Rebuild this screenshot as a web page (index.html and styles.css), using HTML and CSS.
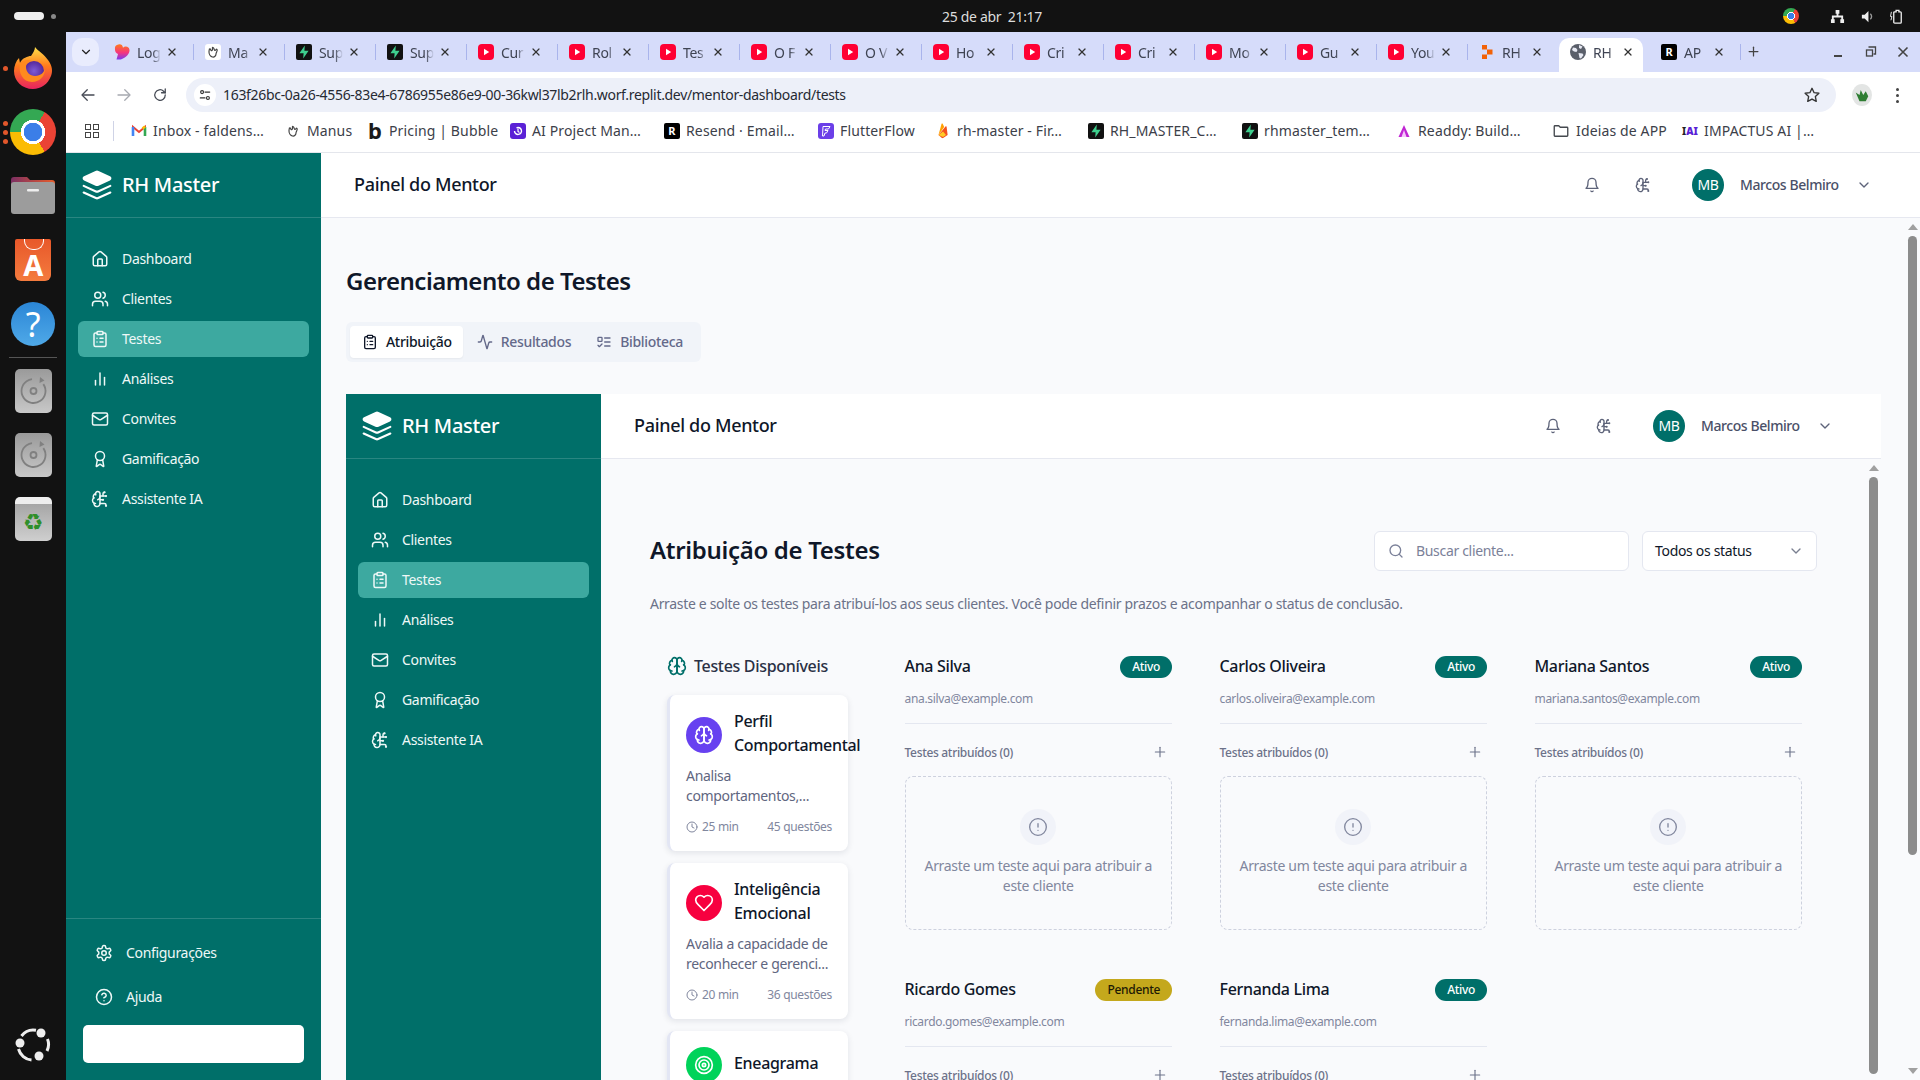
FILE: index.html
```html
<!DOCTYPE html>
<html lang="pt-BR">
<head>
    <meta charset="UTF-8">
    <meta name="viewport" content="width=device-width, initial-scale=1.0">
    <title>Gerenciamento de Testes</title>
    <link rel="stylesheet" href="styles.css">
</head>
<body>
    <!-- icon sprite -->
    <svg class="sprite" xmlns="http://www.w3.org/2000/svg">
        <defs><linearGradient id="lg" x1="0" y1="0" x2="0" y2="1"><stop offset="0" stop-color="#ff7a1a"/><stop offset=".55" stop-color="#f5357e"/><stop offset="1" stop-color="#7a3bf0"/></linearGradient></defs>
        <symbol id="i-layers" viewBox="0 0 24 24"><path class="solid" d="m12.83 2.18a2 2 0 0 0-1.66 0L2.6 6.08a1 1 0 0 0 0 1.83l8.58 3.91a2 2 0 0 0 1.66 0l8.58-3.9a1 1 0 0 0 0-1.83Z"/><path d="m22 17.65-9.17 4.16a2 2 0 0 1-1.66 0L2 17.65"/><path d="m22 12.65-9.17 4.16a2 2 0 0 1-1.66 0L2 12.65"/></symbol>
        <symbol id="i-home" viewBox="0 0 24 24"><path d="M15 21v-8a1 1 0 0 0-1-1h-4a1 1 0 0 0-1 1v8"/><path d="M3 10a2 2 0 0 1 .709-1.528l7-5.999a2 2 0 0 1 2.582 0l7 5.999A2 2 0 0 1 21 10v9a2 2 0 0 1-2 2H5a2 2 0 0 1-2-2z"/></symbol>
        <symbol id="i-users" viewBox="0 0 24 24"><path d="M16 21v-2a4 4 0 0 0-4-4H6a4 4 0 0 0-4 4v2"/><circle cx="9" cy="7" r="4"/><path d="M22 21v-2a4 4 0 0 0-3-3.87"/><path d="M16 3.13a4 4 0 0 1 0 7.75"/></symbol>
        <symbol id="i-clipboard" viewBox="0 0 24 24"><rect width="8" height="4" x="8" y="2" rx="1" ry="1"/><path d="M16 4h2a2 2 0 0 1 2 2v14a2 2 0 0 1-2 2H6a2 2 0 0 1-2-2V6a2 2 0 0 1 2-2h2"/><path d="M12 11h4"/><path d="M12 16h4"/><path d="M8 11h.01"/><path d="M8 16h.01"/></symbol>
        <symbol id="i-chart" viewBox="0 0 24 24"><path d="M18 20V10"/><path d="M12 20V4"/><path d="M6 20v-6"/></symbol>
        <symbol id="i-mail" viewBox="0 0 24 24"><rect width="20" height="16" x="2" y="4" rx="2"/><path d="m22 7-8.97 5.7a1.94 1.94 0 0 1-2.06 0L2 7"/></symbol>
        <symbol id="i-award" viewBox="0 0 24 24"><path d="m15.477 12.89 1.515 8.526a.5.5 0 0 1-.81.47l-3.58-2.687a1 1 0 0 0-1.197 0l-3.586 2.686a.5.5 0 0 1-.81-.469l1.514-8.526"/><circle cx="12" cy="8" r="6"/></symbol>
        <symbol id="i-circuit" viewBox="0 0 24 24"><path d="M12 5a3 3 0 1 0-5.997.125 4 4 0 0 0-2.526 5.77 4 4 0 0 0 .556 6.588A4 4 0 1 0 12 18Z"/><path d="M9 13a4.5 4.5 0 0 0 3-4"/><path d="M6.003 5.125A3 3 0 0 0 6.401 6.5"/><path d="M3.477 10.896a4 4 0 0 1 .585-.396"/><path d="M6 18a4 4 0 0 1-1.967-.516"/><path d="M12 13h4"/><path d="M12 18h6a2 2 0 0 1 2 2v1"/><path d="M12 8h8"/><path d="M16 8V5a2 2 0 0 1 2-2"/><circle cx="16" cy="13" r=".5"/><circle cx="18" cy="3" r=".5"/><circle cx="20" cy="21" r=".5"/><circle cx="20" cy="8" r=".5"/></symbol>
        <symbol id="i-settings" viewBox="0 0 24 24"><path d="M12.22 2h-.44a2 2 0 0 0-2 2v.18a2 2 0 0 1-1 1.73l-.43.25a2 2 0 0 1-2 0l-.15-.08a2 2 0 0 0-2.73.73l-.22.38a2 2 0 0 0 .73 2.73l.15.1a2 2 0 0 1 1 1.72v.51a2 2 0 0 1-1 1.74l-.15.09a2 2 0 0 0-.73 2.73l.22.38a2 2 0 0 0 2.73.73l.15-.08a2 2 0 0 1 2 0l.43.25a2 2 0 0 1 1 1.73V20a2 2 0 0 0 2 2h.44a2 2 0 0 0 2-2v-.18a2 2 0 0 1 1-1.73l.43-.25a2 2 0 0 1 2 0l.15.08a2 2 0 0 0 2.73-.73l.22-.39a2 2 0 0 0-.73-2.73l-.15-.08a2 2 0 0 1-1-1.74v-.5a2 2 0 0 1 1-1.74l.15-.09a2 2 0 0 0 .73-2.73l-.22-.38a2 2 0 0 0-2.73-.73l-.15.08a2 2 0 0 1-2 0l-.43-.25a2 2 0 0 1-1-1.73V4a2 2 0 0 0-2-2z"/><circle cx="12" cy="12" r="3"/></symbol>
        <symbol id="i-help" viewBox="0 0 24 24"><circle cx="12" cy="12" r="10"/><path d="M9.09 9a3 3 0 0 1 5.83 1c0 2-3 3-3 3"/><path d="M12 17h.01"/></symbol>
        <symbol id="i-bell" viewBox="0 0 24 24"><path d="M6 8a6 6 0 0 1 12 0c0 7 3 9 3 9H3s3-2 3-9"/><path d="M10.3 21a1.94 1.94 0 0 0 3.4 0"/></symbol>
        <symbol id="i-chevron" viewBox="0 0 24 24"><path d="m6 9 6 6 6-6"/></symbol>
        <symbol id="i-search" viewBox="0 0 24 24"><circle cx="11" cy="11" r="8"/><path d="m21 21-4.3-4.3"/></symbol>
        <symbol id="i-activity" viewBox="0 0 24 24"><path d="M22 12h-2.48a2 2 0 0 0-1.93 1.46l-2.35 8.36a.25.25 0 0 1-.48 0L9.24 2.18a.25.25 0 0 0-.48 0l-2.35 8.36A2 2 0 0 1 4.49 12H2"/></symbol>
        <symbol id="i-todo" viewBox="0 0 24 24"><rect x="3" y="5" width="6" height="6" rx="1"/><path d="m3 17 2 2 4-4"/><path d="M13 6h8"/><path d="M13 12h8"/><path d="M13 18h8"/></symbol>
        <symbol id="i-brain" viewBox="0 0 24 24"><path d="M12 5a3 3 0 1 0-5.997.125 4 4 0 0 0-2.526 5.77 4 4 0 0 0 .556 6.588A4 4 0 1 0 12 18Z"/><path d="M12 5a3 3 0 1 1 5.997.125 4 4 0 0 1 2.526 5.77 4 4 0 0 1-.556 6.588A4 4 0 1 1 12 18Z"/><path d="M15 13a4.5 4.5 0 0 1-3-4 4.5 4.5 0 0 1-3 4"/><path d="M17.599 6.5a3 3 0 0 0 .399-1.375"/><path d="M6.003 5.125A3 3 0 0 0 6.401 6.5"/><path d="M3.477 10.896a4 4 0 0 1 .585-.396"/><path d="M19.938 10.5a4 4 0 0 1 .585.396"/><path d="M6 18a4 4 0 0 1-1.967-.516"/><path d="M19.967 17.484A4 4 0 0 1 18 18"/></symbol>
        <symbol id="i-heart" viewBox="0 0 24 24"><path d="M19 14c1.49-1.46 3-3.21 3-5.5A5.5 5.5 0 0 0 16.5 3c-1.76 0-3 .5-4.5 2-1.5-1.5-2.74-2-4.5-2A5.5 5.5 0 0 0 2 8.5c0 2.3 1.5 4.05 3 5.5l7 7Z"/></symbol>
        <symbol id="i-target" viewBox="0 0 24 24"><circle cx="12" cy="12" r="10"/><circle cx="12" cy="12" r="6"/><circle cx="12" cy="12" r="2"/></symbol>
        <symbol id="i-clock" viewBox="0 0 24 24"><circle cx="12" cy="12" r="10"/><path d="M12 6v6l4 2"/></symbol>
        <symbol id="i-plus" viewBox="0 0 24 24"><path d="M5 12h14"/><path d="M12 5v14"/></symbol>
        <symbol id="i-alert" viewBox="0 0 24 24"><circle cx="12" cy="12" r="10"/><path d="M12 8v4"/><path d="M12 16h.01"/></symbol>
        <symbol id="i-x" viewBox="0 0 24 24"><path d="M6 6l12 12"/><path d="M18 6 6 18"/></symbol>
        <symbol id="i-back" viewBox="0 0 24 24"><path d="M20 12H5"/><path d="m11 5-7 7 7 7"/></symbol>
        <symbol id="i-forward" viewBox="0 0 24 24"><path d="M4 12h15"/><path d="m13 5 7 7-7 7"/></symbol>
        <symbol id="i-reload" viewBox="0 0 24 24"><path d="M19 12a7 7 0 1 1-2.2-5.1L19 9"/><path d="M19 4v5h-5"/></symbol>
        <symbol id="i-tune" viewBox="0 0 24 24"><circle cx="7" cy="7" r="2.5"/><path d="M12 7h8"/><circle cx="17" cy="17" r="2.5"/><path d="M4 17h8"/></symbol>
        <symbol id="i-star" viewBox="0 0 24 24"><path d="M12 3l2.8 5.9 6.4.8-4.7 4.4 1.2 6.4-5.7-3.1-5.7 3.1 1.2-6.4-4.7-4.4 6.4-.8z"/></symbol>
        <symbol id="i-folder" viewBox="0 0 24 24"><path d="M3 6a1 1 0 0 1 1-1h5l2 2h9a1 1 0 0 1 1 1v10a1 1 0 0 1-1 1H4a1 1 0 0 1-1-1z"/></symbol>
        <symbol id="f-yt" viewBox="0 0 16 16"><rect width="16" height="16" rx="4" fill="#ff0033"/><path d="M6 4.800v6.400L11.200 8z" fill="#fff"/></symbol>
        <symbol id="f-supa" viewBox="0 0 16 16"><rect width="16" height="16" rx="2" fill="#111"/><path d="M8.800 1.500 3.400 9.200h4.200l-.4 5.300 5.400-7.700H8.400z" fill="#3ecf8e"/></symbol>
        <symbol id="f-love" viewBox="0 0 16 16"><path d="M1 5a4 4 0 0 1 8-1.200A3.700 3.700 0 0 1 15.500 6.500c0 3.500-3.500 6.800-7.500 8.500-.8.400-1.800.5-2.800.5H2.500L4 10A5 5 0 0 1 1 5z" fill="url(#lg)"/></symbol>
        <symbol id="f-manus" viewBox="0 0 16 16"><rect width="16" height="16" rx="3" fill="#fff"/><path d="M4.500 5c1.500-1 1 2.500 2.500 1.500S6.500 3 8 3.500s1 3 2 3 1-2 2-1-1 3-1 4.500-1.500 3.500-3.500 3-3.500-3-3.500-5 .5-2.500.5-3.500z" fill="none" stroke="#444" stroke-width="1.200"/></symbol>
        <symbol id="f-replit" viewBox="0 0 16 16"><path d="M3 1h5v4.500H3zM8 5.500h5.500v5H8zM3 10.500h5V15H3z" fill="#f26207"/></symbol>
        <symbol id="f-globe" viewBox="0 0 16 16"><circle cx="8" cy="8" r="8" fill="#5a5f6a"/><path d="M3 3.500l3 .5 1.500 2-1 2-2.500-.5-2-1.500zM9 1l3.500 1.500L11 5 9 4zM8.500 9l4 .5 1 1.500-2.500 3.500-1.500-.5-.5-2.500z" fill="#e8eaf3"/></symbol>
        <symbol id="f-gmail" viewBox="0 0 16 16"><path d="M2 13V4l6 5 6-5v9" fill="none" stroke="#ea4335" stroke-width="2"/><path d="M2 4v9" stroke="#4285f4" stroke-width="2.600"/><path d="M14 4v9" stroke="#34a853" stroke-width="2.600"/><path d="M14 3.500 11.500 5.500" stroke="#fbbc04" stroke-width="2.400"/></symbol>
        <symbol id="f-ai" viewBox="0 0 16 16"><rect width="16" height="16" rx="3" fill="#5b21d6"/><path d="M4.500 8a3.500 3.500 0 1 0 2-3.200" fill="none" stroke="#fff" stroke-width="1.400"/><path d="M8 5.500V8.500l1.500 1" fill="none" stroke="#fff" stroke-width="1.200"/></symbol>
        <symbol id="f-flutter" viewBox="0 0 16 16"><rect width="16" height="16" rx="3" fill="#6b3fe8"/><path d="M5 3.500h7l-1.500 2.500h-3l-.5 1.500h3L8.500 10H7l-1 3H4.500z" fill="none" stroke="#fff" stroke-width="1"/></symbol>
        <symbol id="f-fire" viewBox="0 0 16 16"><path d="M3.500 12 6.500 1c.3-.6 1-.6 1.300 0l1.400 3z" fill="#ffa000"/><path d="M3.500 12 10.500 3.500c.4-.4 1-.3 1.100.3l1 8.200-4.500 3c-.4.2-.8.2-1.200 0z" fill="#f4511e"/><path d="M3.500 12 8 8.500l3 3.500-3 2z" fill="#ffca28"/></symbol>
        <symbol id="f-readdy" viewBox="0 0 16 16"><path d="M8 2l5.500 12H2.500z" fill="#c026d3"/><path d="M8 7l2.500 7h-5z" fill="#f5c6fb"/></symbol>
        <symbol id="d-disc" viewBox="0 0 37 44"><circle cx="18.500" cy="22" r="12" fill="none" stroke="#808080" stroke-width="1.800" stroke-dasharray="62 14" transform="rotate(-35 18.500 22)"/><path d="M25 8l4.500 3.500-5 2.500z" fill="#808080"/><circle cx="18.500" cy="22" r="3" fill="none" stroke="#808080" stroke-width="1.800"/></symbol>
    </svg>

    <div class="os-bar">
        <div class="os-left"><span class="os-pill"></span><span class="os-dot"></span></div>
        <div class="os-clock">25 de abr &nbsp;21:17</div>
        <div class="os-tray">
            <span class="chrome-ball tray-chrome"></span>
            <svg class="tray-icon" viewBox="0 0 16 16"><path d="M6 1h4v4H9v2h5v4h1v4h-4v-4h1V9H4v2h1v4H1v-4h1V7h5V5H6z" fill="#eee"/></svg>
            <svg class="tray-icon" viewBox="0 0 16 16"><path d="M2 6h3l4-4v12l-4-4H2z" fill="#eee"/><path d="M11 5a4 4 0 0 1 0 6" fill="none" stroke="#999" stroke-width="1.500"/></svg>
            <svg class="tray-icon" viewBox="0 0 16 16"><path d="M6.500 1.500h3V3H11a1 1 0 0 1 1 1v10a1 1 0 0 1-1 1H5a1 1 0 0 1-1-1V4a1 1 0 0 1 1-1h1.500z" fill="none" stroke="#eee" stroke-width="1.400"/><path d="M1.500 3 .5 8h1.500L1 12" fill="none" stroke="#eee"/></svg>
        </div>
    </div>

    <div class="desktop">
        <nav class="dock">
            <div class="dock-item dock-running">
                <svg viewBox="0 0 44 44">
                    <defs>
                        <linearGradient id="fx" x1="0" y1="0" x2="0" y2="1"><stop offset="0" stop-color="#ffe14a"/><stop offset=".45" stop-color="#ff7b1c"/><stop offset="1" stop-color="#e8235f"/></linearGradient>
                        <radialGradient id="fxi"><stop offset="0" stop-color="#7d5bd6"/><stop offset="1" stop-color="#54279c"/></radialGradient>
                    </defs>
                    <path d="M24 1c3 4 9 7 13 13 4 5 5 11 3 16-3 8-10 13-18 13C11 43 3 35 3 25c0-5 2-10 5-13l1 5c2-5 8-7 11-7 2-3 4-6 4-9z" fill="url(#fx)"/>
                    <circle cx="23" cy="25" r="10" fill="url(#fxi)"/>
                    <path d="M9 17c3-3 8-4 12-2-4 0-6 3-6 6 0 5 4 9 9 9 6 0 9-4 10-7 0 8-6 13-13 13C12 36 7 27 9 17z" fill="#ff8a1f"/>
                </svg>
            </div>
            <div class="dock-item dock-running-3"><span class="chrome-ball dock-chrome"></span></div>
            <div class="dock-item">
                <svg viewBox="0 0 44 44">
                    <defs><linearGradient id="fold" x1="0" y1="0" x2="1" y2="0"><stop offset="0" stop-color="#7c2f63"/><stop offset="1" stop-color="#e85d2a"/></linearGradient></defs>
                    <path d="M0 6a3 3 0 0 1 3-3h13l3 3h22a3 3 0 0 1 3 3v6H0z" fill="url(#fold)"/><rect y="8" width="44" height="32" rx="3" fill="#9c9c9c"/><rect x="16" y="15" width="12" height="2.500" rx="1" fill="#eee"/>
                </svg>
            </div>
            <div class="dock-item">
                <div class="store-icon"><span>A</span></div>
            </div>
            <div class="dock-item"><div class="help-icon">?</div></div>
            <div class="dock-sep"></div>
            <div class="dock-item"><div class="disc-icon"><svg><use href="#d-disc"/></svg></div></div>
            <div class="dock-item"><div class="disc-icon"><svg><use href="#d-disc"/></svg></div></div>
            <div class="dock-item"><div class="trash-icon">♻</div></div>
            <div class="dock-logo">
                <svg viewBox="0 0 36 36"><path d="M21 3.300A15 15 0 0 0 6.500 9M3.500 22a15 15 0 0 0 13 11M32 24a15 15 0 0 0 .500-12" fill="none" stroke="#eee" stroke-width="3"/><circle cx="5" cy="16" r="4.500" fill="#eee"/><circle cx="26" cy="6" r="4.500" fill="#eee"/><circle cx="24" cy="29" r="4.500" fill="#eee"/></svg>
            </div>
        </nav>

        <div class="browser">
            <div class="tabstrip">
                <div class="tab-search"><svg class="ic ic-14 ic-dark"><use href="#i-chevron"/></svg></div>
                <div class="tab"><svg class="fav"><use href="#f-love"/></svg><span class="tab-title">Log</span><svg class="ic tab-close"><use href="#i-x"/></svg></div>
                <div class="tab"><svg class="fav"><use href="#f-manus"/></svg><span class="tab-title">Ma</span><svg class="ic tab-close"><use href="#i-x"/></svg></div>
                <div class="tab"><svg class="fav"><use href="#f-supa"/></svg><span class="tab-title">Sup</span><svg class="ic tab-close"><use href="#i-x"/></svg></div>
                <div class="tab"><svg class="fav"><use href="#f-supa"/></svg><span class="tab-title">Sup</span><svg class="ic tab-close"><use href="#i-x"/></svg></div>
                <div class="tab"><svg class="fav"><use href="#f-yt"/></svg><span class="tab-title">Cur</span><svg class="ic tab-close"><use href="#i-x"/></svg></div>
                <div class="tab"><svg class="fav"><use href="#f-yt"/></svg><span class="tab-title">Rol</span><svg class="ic tab-close"><use href="#i-x"/></svg></div>
                <div class="tab"><svg class="fav"><use href="#f-yt"/></svg><span class="tab-title">Tes</span><svg class="ic tab-close"><use href="#i-x"/></svg></div>
                <div class="tab"><svg class="fav"><use href="#f-yt"/></svg><span class="tab-title">O F</span><svg class="ic tab-close"><use href="#i-x"/></svg></div>
                <div class="tab"><svg class="fav"><use href="#f-yt"/></svg><span class="tab-title">O V</span><svg class="ic tab-close"><use href="#i-x"/></svg></div>
                <div class="tab"><svg class="fav"><use href="#f-yt"/></svg><span class="tab-title">Ho</span><svg class="ic tab-close"><use href="#i-x"/></svg></div>
                <div class="tab"><svg class="fav"><use href="#f-yt"/></svg><span class="tab-title">Cri</span><svg class="ic tab-close"><use href="#i-x"/></svg></div>
                <div class="tab"><svg class="fav"><use href="#f-yt"/></svg><span class="tab-title">Cri</span><svg class="ic tab-close"><use href="#i-x"/></svg></div>
                <div class="tab"><svg class="fav"><use href="#f-yt"/></svg><span class="tab-title">Mo</span><svg class="ic tab-close"><use href="#i-x"/></svg></div>
                <div class="tab"><svg class="fav"><use href="#f-yt"/></svg><span class="tab-title">Gu</span><svg class="ic tab-close"><use href="#i-x"/></svg></div>
                <div class="tab"><svg class="fav"><use href="#f-yt"/></svg><span class="tab-title">You</span><svg class="ic tab-close"><use href="#i-x"/></svg></div>
                <div class="tab tab-no-sep"><svg class="fav"><use href="#f-replit"/></svg><span class="tab-title">RH</span><svg class="ic tab-close"><use href="#i-x"/></svg></div>
                <div class="tab tab-active"><svg class="fav"><use href="#f-globe"/></svg><span class="tab-title">RH</span><svg class="ic tab-close"><use href="#i-x"/></svg></div>
                <div class="tab"><span class="fav fav-letter">R</span><span class="tab-title">AP</span><svg class="ic tab-close"><use href="#i-x"/></svg></div>
                <svg class="ic new-tab"><use href="#i-plus"/></svg>
                <div class="win-controls">
                    <svg class="win-btn" viewBox="0 0 12 12"><path d="M1 10h8" stroke-width="2"/></svg>
                    <svg class="win-btn" viewBox="0 0 12 12"><path d="M3.500 1h7v7h-2"/><rect x="1.500" y="4" width="6" height="6"/></svg>
                    <svg class="win-btn" viewBox="0 0 12 12"><path d="M1.500 1.500l9 9M10.500 1.500l-9 9" stroke-width="1.600"/></svg>
                </div>
            </div>

            <div class="toolbar">
                <svg class="ic ic-18 nav-btn"><use href="#i-back"/></svg>
                <svg class="ic ic-18 nav-btn nav-off"><use href="#i-forward"/></svg>
                <svg class="ic ic-18 nav-btn"><use href="#i-reload"/></svg>
                <div class="omnibox">
                    <span class="site-chip"><svg class="ic ic-14"><use href="#i-tune"/></svg></span>
                    <span class="url">163f26bc-0a26-4556-83e4-6786955e86e9-00-36kwl37lb2rlh.worf.replit.dev/mentor-dashboard/tests</span>
                    <svg class="ic ic-18 omni-star"><use href="#i-star"/></svg>
                </div>
                <span class="profile-chip"><svg viewBox="0 0 16 16"><path d="M3 6l3 2 1-4 2 4 2-3 2 4-2 4H6z" fill="#2e7d32"/></svg></span>
                <span class="kebab"><i></i><i></i><i></i></span>
            </div>

            <div class="bookmarks">
                <div class="apps-btn"><i></i><i></i><i></i><i></i></div>
                <div class="bm-sep"></div>
                <div class="bm-list">
                    <div class="bm"><svg class="fav"><use href="#f-gmail"/></svg>Inbox - faldens…</div>
                    <div class="bm"><svg class="fav"><use href="#f-manus"/></svg>Manus</div>
                    <div class="bm"><span class="fav fav-bubble">b</span>Pricing | Bubble</div>
                    <div class="bm"><svg class="fav"><use href="#f-ai"/></svg>AI Project Man…</div>
                    <div class="bm"><span class="fav fav-letter">R</span>Resend · Email…</div>
                    <div class="bm"><svg class="fav"><use href="#f-flutter"/></svg>FlutterFlow</div>
                    <div class="bm"><svg class="fav"><use href="#f-fire"/></svg>rh-master - Fir…</div>
                    <div class="bm"><svg class="fav"><use href="#f-supa"/></svg>RH_MASTER_C…</div>
                    <div class="bm"><svg class="fav"><use href="#f-supa"/></svg>rhmaster_tem…</div>
                    <div class="bm"><svg class="fav"><use href="#f-readdy"/></svg>Readdy: Build…</div>
                    <div class="bm"><svg class="ic fav fav-folder"><use href="#i-folder"/></svg>Ideias de APP</div>
                    <div class="bm"><span class="fav fav-iai">I<b>AI</b></span>IMPACTUS AI |…</div>
                </div>
            </div>

            <div class="app">
                <aside class="sidebar">
                    <div class="brand">
                        <svg class="ic brand-logo"><use href="#i-layers"/></svg>
                        <span>RH Master</span>
                    </div>
                    <ul class="side-nav">
                        <li><svg class="ic"><use href="#i-home"/></svg>Dashboard</li>
                        <li><svg class="ic"><use href="#i-users"/></svg>Clientes</li>
                        <li class="active"><svg class="ic"><use href="#i-clipboard"/></svg>Testes</li>
                        <li><svg class="ic"><use href="#i-chart"/></svg>Análises</li>
                        <li><svg class="ic"><use href="#i-mail"/></svg>Convites</li>
                        <li><svg class="ic"><use href="#i-award"/></svg>Gamificação</li>
                        <li><svg class="ic"><use href="#i-circuit"/></svg>Assistente IA</li>
                    </ul>
                    <div class="side-footer">
                        <div class="side-link"><svg class="ic"><use href="#i-settings"/></svg>Configurações</div>
                        <div class="side-link"><svg class="ic"><use href="#i-help"/></svg>Ajuda</div>
                        <div class="side-blank"></div>
                    </div>
                </aside>

                <div class="main">
                    <header class="top-header">
                        <div class="top-title">Painel do Mentor</div>
                        <div class="top-actions">
                            <span class="icon-btn"><svg class="ic ic-16"><use href="#i-bell"/></svg></span>
                            <span class="icon-btn"><svg class="ic ic-16"><use href="#i-circuit"/></svg></span>
                            <div class="user">
                                <span class="avatar">MB</span>
                                <span class="user-name">Marcos Belmiro</span>
                                <svg class="ic ic-16 user-chevron"><use href="#i-chevron"/></svg>
                            </div>
                        </div>
                    </header>

                    <div class="scroll-area">
                        <div class="page">
                            <h1 class="page-title">Gerenciamento de Testes</h1>
                            <div class="tabs">
                                <div class="tabs-item selected"><svg class="ic ic-16"><use href="#i-clipboard"/></svg>Atribuição</div>
                                <div class="tabs-item"><svg class="ic ic-16"><use href="#i-activity"/></svg>Resultados</div>
                                <div class="tabs-item"><svg class="ic ic-16"><use href="#i-todo"/></svg>Biblioteca</div>
                            </div>

                            <!-- nested copy of the layout -->
                            <div class="app app-nested">
                                <aside class="sidebar">
                                    <div class="brand">
                                        <svg class="ic brand-logo"><use href="#i-layers"/></svg>
                                        <span>RH Master</span>
                                    </div>
                                    <ul class="side-nav">
                                        <li><svg class="ic"><use href="#i-home"/></svg>Dashboard</li>
                                        <li><svg class="ic"><use href="#i-users"/></svg>Clientes</li>
                                        <li class="active"><svg class="ic"><use href="#i-clipboard"/></svg>Testes</li>
                                        <li><svg class="ic"><use href="#i-chart"/></svg>Análises</li>
                                        <li><svg class="ic"><use href="#i-mail"/></svg>Convites</li>
                                        <li><svg class="ic"><use href="#i-award"/></svg>Gamificação</li>
                                        <li><svg class="ic"><use href="#i-circuit"/></svg>Assistente IA</li>
                                    </ul>
                                </aside>

                                <div class="main">
                                    <header class="top-header">
                                        <div class="top-title">Painel do Mentor</div>
                                        <div class="top-actions">
                                            <span class="icon-btn"><svg class="ic ic-16"><use href="#i-bell"/></svg></span>
                                            <span class="icon-btn"><svg class="ic ic-16"><use href="#i-circuit"/></svg></span>
                                            <div class="user">
                                                <span class="avatar">MB</span>
                                                <span class="user-name">Marcos Belmiro</span>
                                                <svg class="ic ic-16 user-chevron"><use href="#i-chevron"/></svg>
                                            </div>
                                        </div>
                                    </header>

                                    <div class="scroll-area">
                                        <div class="assign">
                                            <div class="assign-head">
                                                <h2 class="assign-title">Atribuição de Testes</h2>
                                                <div class="assign-filters">
                                                    <div class="search-box"><svg class="ic ic-16"><use href="#i-search"/></svg><span>Buscar cliente...</span></div>
                                                    <div class="status-select"><span>Todos os status</span><svg class="ic ic-16"><use href="#i-chevron"/></svg></div>
                                                </div>
                                            </div>
                                            <p class="assign-desc">Arraste e solte os testes para atribuí-los aos seus clientes. Você pode definir prazos e acompanhar o status de conclusão.</p>

                                            <div class="board">
                                                <div class="test-list">
                                                    <div class="test-list-title"><svg class="ic ic-20"><use href="#i-brain"/></svg>Testes Disponíveis</div>

                                                    <div class="test-card">
                                                        <div class="test-top">
                                                            <span class="test-icon purple"><svg class="ic ic-20"><use href="#i-brain"/></svg></span>
                                                            <div class="test-name">Perfil Comportamental</div>
                                                        </div>
                                                        <p class="test-desc">Analisa<br>comportamentos,...</p>
                                                        <div class="test-meta"><span class="test-time"><svg class="ic"><use href="#i-clock"/></svg>25 min</span><span>45 questões</span></div>
                                                    </div>

                                                    <div class="test-card">
                                                        <div class="test-top">
                                                            <span class="test-icon red"><svg class="ic ic-20"><use href="#i-heart"/></svg></span>
                                                            <div class="test-name">Inteligência Emocional</div>
                                                        </div>
                                                        <p class="test-desc">Avalia a capacidade de<br>reconhecer e gerenci...</p>
                                                        <div class="test-meta"><span class="test-time"><svg class="ic"><use href="#i-clock"/></svg>20 min</span><span>36 questões</span></div>
                                                    </div>

                                                    <div class="test-card">
                                                        <div class="test-top">
                                                            <span class="test-icon green"><svg class="ic ic-20"><use href="#i-target"/></svg></span>
                                                            <div class="test-name">Eneagrama</div>
                                                        </div>
                                                    </div>
                                                </div>

                                                <div class="client-grid">
                                                    <div class="client">
                                                        <div class="client-head"><span class="client-name">Ana Silva</span><span class="badge">Ativo</span></div>
                                                        <div class="client-email">ana.silva@example.com</div>
                                                        <div class="client-label"><span>Testes atribuídos (0)</span><svg class="ic ic-16"><use href="#i-plus"/></svg></div>
                                                        <div class="dropzone"><span class="drop-icon"><svg class="ic ic-20"><use href="#i-alert"/></svg></span><p>Arraste um teste aqui para atribuir a este cliente</p></div>
                                                    </div>
                                                    <div class="client">
                                                        <div class="client-head"><span class="client-name">Carlos Oliveira</span><span class="badge">Ativo</span></div>
                                                        <div class="client-email">carlos.oliveira@example.com</div>
                                                        <div class="client-label"><span>Testes atribuídos (0)</span><svg class="ic ic-16"><use href="#i-plus"/></svg></div>
                                                        <div class="dropzone"><span class="drop-icon"><svg class="ic ic-20"><use href="#i-alert"/></svg></span><p>Arraste um teste aqui para atribuir a este cliente</p></div>
                                                    </div>
                                                    <div class="client">
                                                        <div class="client-head"><span class="client-name">Mariana Santos</span><span class="badge">Ativo</span></div>
                                                        <div class="client-email">mariana.santos@example.com</div>
                                                        <div class="client-label"><span>Testes atribuídos (0)</span><svg class="ic ic-16"><use href="#i-plus"/></svg></div>
                                                        <div class="dropzone"><span class="drop-icon"><svg class="ic ic-20"><use href="#i-alert"/></svg></span><p>Arraste um teste aqui para atribuir a este cliente</p></div>
                                                    </div>
                                                    <div class="client">
                                                        <div class="client-head"><span class="client-name">Ricardo Gomes</span><span class="badge badge-pending">Pendente</span></div>
                                                        <div class="client-email">ricardo.gomes@example.com</div>
                                                        <div class="client-label"><span>Testes atribuídos (0)</span><svg class="ic ic-16"><use href="#i-plus"/></svg></div>
                                                    </div>
                                                    <div class="client">
                                                        <div class="client-head"><span class="client-name">Fernanda Lima</span><span class="badge">Ativo</span></div>
                                                        <div class="client-email">fernanda.lima@example.com</div>
                                                        <div class="client-label"><span>Testes atribuídos (0)</span><svg class="ic ic-16"><use href="#i-plus"/></svg></div>
                                                    </div>
                                                </div>
                                            </div>
                                        </div>
                                        <div class="scrollbar scrollbar-inner"><span class="sb-up"></span><span class="sb-thumb"></span></div>
                                    </div>
                                </div>
                            </div>
                        </div>
                        <div class="scrollbar"><span class="sb-up"></span><span class="sb-thumb"></span><span class="sb-down"></span></div>
                    </div>
                </div>
            </div>
        </div>
    </div>
</body>
</html>
```

FILE: styles.css
```css
* {
    box-sizing: border-box;
}

html, body {
    margin: 0;
    padding: 0;
    width: 1920px;
    height: 1080px;
    overflow: hidden;
}

body {
    font-family: "Noto Sans", "DejaVu Sans", sans-serif;
    letter-spacing: -0.02em;
    color: #0f1729;
    background-color: #121212;
    display: flex;
    flex-direction: column;
}

h1, h2, p, ul {
    margin: 0;
    padding: 0;
}

/* kept in the render tree, gradients die under display: none */
.sprite {
    position: absolute;
    width: 0;
    height: 0;
}

/* lucide style line icon */
.ic {
    width: 18px;
    height: 18px;
    flex: none;
    fill: none;
    stroke: currentColor;
    stroke-width: 2;
    stroke-linecap: round;
    stroke-linejoin: round;
}

.ic-14 { width: 14px; height: 14px; }
.ic-16 { width: 16px; height: 16px; }
.ic-18 { width: 18px; height: 18px; }
.ic-20 { width: 20px; height: 20px; }
.ic-dark { color: #222; }
.solid { fill: currentColor; }

/* ubuntu top bar */
.os-bar {
    height: 32px;
    flex: none;
    display: grid;
    grid-template-columns: 942px auto 1fr;
    align-items: center;
    background-color: #121212;
    color: #dcdcdc;
    font-size: 14px;
}

.os-left {
    display: flex;
    align-items: center;
    gap: 7px;
    padding-left: 14px;
}

.os-pill {
    width: 30px;
    height: 8px;
    border-radius: 4px;
    background-color: #efefef;
}

.os-dot {
    width: 5px;
    height: 5px;
    border-radius: 50%;
    background-color: #888;
}

.os-tray {
    display: flex;
    justify-content: flex-end;
    align-items: center;
    gap: 15px;
    padding-right: 15px;
}

.tray-icon {
    width: 15px;
    height: 15px;
}

.tray-chrome {
    width: 16px;
    height: 16px;
    margin-right: 16px;
}

.chrome-ball {
    display: block;
    border-radius: 50%;
    background:
        radial-gradient(circle, #3b7ee8 0 28%, #fff 29% 37%, transparent 38%),
        conic-gradient(from 30deg, #ea4335 0 120deg, #fbbc04 120deg 240deg, #34a853 240deg 360deg);
}

/* dock */
.desktop {
    flex: 1;
    display: flex;
    min-height: 0;
}

.dock {
    width: 66px;
    flex: none;
    display: flex;
    flex-direction: column;
    align-items: center;
    padding-top: 14px;
    background-color: #121212;
}

.dock-item {
    position: relative;
    width: 44px;
    height: 44px;
    margin-bottom: 20px;
    display: flex;
    align-items: center;
    justify-content: center;
}

.dock-item > svg {
    width: 44px;
    height: 44px;
}

.dock-running::before,
.dock-running-3::before {
    content: "";
    position: absolute;
    left: -8px;
    top: 20px;
    width: 5px;
    height: 5px;
    border-radius: 50%;
    background-color: #e2572b;
}

.dock-running-3::before {
    box-shadow: 0 -9px 0 #e2572b, 0 9px 0 #e2572b;
}

.dock-chrome {
    width: 46px;
    height: 46px;
    flex: none;
}

.dock-sep {
    width: 48px;
    height: 1px;
    margin: -9px 0 11px;
    background-color: #555;
}

.store-icon {
    position: relative;
    width: 36px;
    height: 42px;
    display: flex;
    align-items: flex-end;
    justify-content: center;
    border-radius: 2px 2px 6px 6px;
    background: linear-gradient(#e8582a, #f47b3e);
    color: #fff;
    font-size: 29px;
    font-weight: 700;
    line-height: 32px;
}

.store-icon::before {
    content: "";
    position: absolute;
    left: 9px;
    top: 0;
    width: 18px;
    height: 10px;
    border: 1.5px solid #fff;
    border-top: none;
    border-radius: 0 0 9px 9px;
}

.help-icon {
    width: 44px;
    height: 44px;
    border-radius: 50%;
    background: linear-gradient(#2b86d6, #4fa9e8);
    color: #fff;
    font-size: 34px;
    line-height: 44px;
    text-align: center;
}

.disc-icon {
    width: 37px;
    height: 44px;
    border-radius: 5px;
    background: linear-gradient(#9a9a9a, #c8c8c8);
}

.disc-icon svg {
    display: block;
    width: 37px;
    height: 44px;
}

.trash-icon {
    width: 37px;
    height: 44px;
    border-radius: 5px;
    border-top: 7px solid #eee;
    background: linear-gradient(#a6a6a6, #cfcfcf);
    color: #2f8f2a;
    font-family: "DejaVu Sans", sans-serif;
    font-size: 23px;
    line-height: 37px;
    text-align: center;
}

.dock-logo {
    margin-top: auto;
    margin-bottom: 17px;
    width: 36px;
    height: 36px;
}

.dock-logo svg {
    width: 36px;
    height: 36px;
}

/* chrome */
.browser {
    flex: 1;
    min-width: 0;
    display: flex;
    flex-direction: column;
    background-color: #fff;
}

.tabstrip {
    height: 40px;
    flex: none;
    display: flex;
    background-color: #d6dcfa;
    padding-left: 6px;
}

.tab-search {
    width: 27px;
    height: 28px;
    margin: 6px 4px 0 0;
    border-radius: 10px;
    background-color: #e9ecfd;
    display: flex;
    align-items: center;
    justify-content: center;
}

.tab {
    position: relative;
    flex: 0 0 91px;
    height: 34px;
    margin-top: 6px;
    padding: 0 0 6px 11px;
    display: flex;
    align-items: center;
    font-size: 14px;
    color: #3f4453;
}

.tab::after {
    content: "";
    position: absolute;
    right: 0;
    top: 6px;
    width: 1px;
    height: 16px;
    background-color: #a9b4ec;
}

.tab-no-sep::after,
.tab-active::after {
    display: none;
}

.tab-active {
    flex-basis: 84px;
    margin-right: 7px;
    background-color: #fff;
    border-radius: 10px 10px 0 0;
}

.tab-title {
    width: 24px;
    margin-left: 7px;
    overflow: hidden;
    white-space: nowrap;
    -webkit-mask-image: linear-gradient(90deg, #000 65%, transparent);
    mask-image: linear-gradient(90deg, #000 65%, transparent);
}

.tab-close {
    width: 12px;
    height: 12px;
    margin-left: 5px;
    color: #333;
    stroke-width: 2.4;
}

.fav {
    width: 16px;
    height: 16px;
    flex: none;
}

.fav-letter {
    border-radius: 2px;
    background-color: #000;
    color: #fff;
    font-size: 11px;
    font-weight: 700;
    line-height: 16px;
    text-align: center;
}

.fav-bubble {
    font-size: 22px;
    font-weight: 700;
    line-height: 15px;
    color: #1a1a1a;
    text-align: center;
}

.fav-folder {
    color: #45494f;
    stroke-width: 1.8;
    width: 18px;
    height: 18px;
}

.fav-iai {
    font-size: 10px;
    font-weight: 800;
    letter-spacing: 0;
    color: #222;
    line-height: 16px;
}

.fav-iai b {
    color: #5a1fd6;
}

.new-tab {
    width: 15px;
    height: 15px;
    margin: 12px 0 0 5px;
    color: #444;
}

.win-controls {
    margin-left: auto;
    display: flex;
    align-items: center;
    gap: 20px;
    padding-right: 11px;
}

.win-btn {
    width: 12px;
    height: 12px;
    fill: none;
    stroke: #444;
    stroke-width: 1.3;
}

.toolbar {
    height: 46px;
    flex: none;
    display: flex;
    align-items: center;
    padding-left: 13px;
    gap: 18px;
}

.nav-btn {
    color: #454a54;
    stroke-width: 1.7;
}

.nav-off {
    color: #a6a9b0;
}

.omnibox {
    width: 1650px;
    height: 34px;
    margin-left: -1px;
    padding: 0 15px 0 8px;
    display: flex;
    align-items: center;
    border-radius: 17px;
    background-color: #edf0f9;
}

.site-chip {
    width: 22px;
    height: 22px;
    margin-right: 7px;
    border-radius: 50%;
    background-color: #fff;
    color: #333;
    display: flex;
    align-items: center;
    justify-content: center;
}

.url {
    flex: 1;
    padding-bottom: 2px;
    font-size: 14px;
    color: #262a33;
    white-space: nowrap;
}

.omni-star {
    color: #333;
    stroke-width: 1.8;
}

.profile-chip {
    width: 20px;
    height: 22px;
    margin-left: -2px;
    border-radius: 50%;
    background-color: #e3e5e4;
}

.profile-chip svg {
    display: block;
    width: 20px;
    height: 22px;
}

.kebab {
    display: flex;
    flex-direction: column;
    gap: 3px;
    margin-left: 6px;
}

.kebab i {
    width: 3px;
    height: 3px;
    border-radius: 50%;
    background-color: #444;
}

.bookmarks {
    height: 35px;
    flex: none;
    display: flex;
    align-items: center;
    padding: 0 0 9px 19px;
    border-bottom: 1px solid #e4e6ec;
    font-size: 14px;
    letter-spacing: 0.01em;
    color: #3c4049;
}

.apps-btn {
    width: 14px;
    display: grid;
    grid-template-columns: 6px 6px;
    gap: 2px;
}

.apps-btn i {
    height: 6px;
    border: 1.5px solid #444;
}

.bm-sep {
    width: 1px;
    height: 20px;
    margin: 0 17px 0 14px;
    background-color: #cfd3e6;
}

.bm-list {
    display: grid;
    grid-template-columns: 154px 82px 143px 154px 154px 117px 153px 154px 154px 156px 130px 180px;
}

.bm {
    display: flex;
    align-items: center;
    gap: 6px;
    white-space: nowrap;
}

/* app shell */
.app {
    flex: 1;
    min-height: 0;
    display: flex;
    background-color: #f9fafc;
}

.app-nested {
    flex: none;
    height: 686px;
}

.sidebar {
    width: 255px;
    flex: none;
    display: flex;
    flex-direction: column;
    background-color: #006f69;
    color: #fff;
}

.brand {
    height: 65px;
    flex: none;
    display: flex;
    align-items: center;
    gap: 9px;
    padding-left: 15px;
    border-bottom: 1px solid rgba(255, 255, 255, 0.16);
    font-size: 20px;
    font-weight: 500;
}

.brand span {
    padding-bottom: 2px;
}

.brand-logo {
    width: 32px;
    height: 32px;
    stroke-width: 1.6;
}

.side-nav {
    list-style: none;
    flex: 1;
    padding: 23px 12px 0;
}

.side-nav li {
    height: 36px;
    margin-bottom: 4px;
    padding: 0 0 2px 13px;
    display: flex;
    align-items: center;
    gap: 13px;
    border-radius: 6px;
    font-size: 14px;
    color: #eef8f7;
}

.side-nav li svg,
.side-link svg {
    margin-top: 2px;
}

.side-nav li.active {
    background-color: #3da9a0;
}

.side-footer {
    border-top: 1px solid rgba(255, 255, 255, 0.16);
    padding: 16px 17px 17px;
}

.side-link {
    height: 36px;
    margin-bottom: 8px;
    padding: 0 0 2px 12px;
    display: flex;
    align-items: center;
    gap: 13px;
    font-size: 14px;
    color: #eef8f7;
}

.side-blank {
    height: 38px;
    margin-top: 10px;
    border-radius: 5px;
    background-color: #fff;
}

.main {
    flex: 1;
    min-width: 0;
    display: flex;
    flex-direction: column;
}

.top-header {
    height: 65px;
    flex: none;
    display: flex;
    align-items: center;
    justify-content: space-between;
    padding: 0 48px 0 33px;
    background-color: #fff;
    border-bottom: 1px solid #e6e8f0;
}

.top-title {
    padding-bottom: 2px;
    font-size: 18px;
    font-weight: 500;
}

.top-actions {
    display: flex;
    align-items: center;
    gap: 15px;
}

.icon-btn {
    width: 36px;
    height: 36px;
    display: flex;
    align-items: center;
    justify-content: center;
    color: #5d6379;
}

.user {
    display: flex;
    align-items: center;
    margin-left: 16px;
}

.avatar {
    width: 32px;
    height: 32px;
    border-radius: 50%;
    background-color: #006f69;
    color: #fff;
    font-size: 14px;
    text-align: center;
    line-height: 31px;
}

.user-name {
    margin-left: 16px;
    padding-bottom: 2px;
    width: 100px;
    font-size: 14px;
    font-weight: 500;
    letter-spacing: -0.03em;
    color: #4a5068;
    white-space: nowrap;
}

.user-chevron {
    margin-left: 16px;
    color: #5d6379;
}

.scroll-area {
    flex: 1;
    min-height: 0;
    display: flex;
    overflow: hidden;
}

.page {
    flex: 1;
    min-width: 0;
    padding: 47px 24px 0 25px;
}

.page-title {
    font-size: 24px;
    line-height: 32px;
    font-weight: 600;
    margin-bottom: 25px;
    letter-spacing: -0.02em;
}

.tabs {
    display: inline-flex;
    height: 40px;
    padding: 4px;
    gap: 2px;
    border-radius: 6px;
    background-color: #f1f4f9;
    margin-bottom: 32px;
    vertical-align: top;
}

.tabs-item {
    display: flex;
    align-items: center;
    gap: 8px;
    padding: 0 11px 2px 12px;
    border-radius: 4px;
    font-size: 14px;
    font-weight: 500;
    color: #64698a;
}

.tabs-item:last-child {
    padding-right: 14px;
}

.tabs-item svg {
    margin-top: 2px;
}

.tabs-item.selected {
    background-color: #fff;
    color: #0f1729;
    box-shadow: 0 1px 2px rgba(0, 0, 0, 0.05);
}

.scrollbar {
    width: 15px;
    flex: none;
    display: flex;
    flex-direction: column;
    align-items: center;
    padding: 6px 0 6px;
}

.sb-up,
.sb-down {
    width: 0;
    height: 0;
    border-left: 5px solid transparent;
    border-right: 5px solid transparent;
    flex: none;
}

.sb-up {
    border-bottom: 6px solid #a0a0a0;
}

.sb-down {
    margin-top: auto;
    border-top: 6px solid #a0a0a0;
}

.sb-thumb {
    width: 9px;
    height: 619px;
    margin-top: 6px;
    border-radius: 5px;
    background-color: #8c8c8c;
}

.scrollbar-inner .sb-thumb {
    height: 700px;
}

/* assignment page */
.assign {
    flex: 1;
    min-width: 0;
    padding: 72px 49px 0;
}

.assign-head {
    display: flex;
    align-items: center;
    justify-content: space-between;
    height: 40px;
}

.assign-title {
    padding-bottom: 2px;
    font-size: 24px;
    font-weight: 600;
    line-height: 32px;
}

.assign-filters {
    display: flex;
    gap: 13px;
}

.search-box,
.status-select {
    height: 40px;
    display: flex;
    align-items: center;
    border: 1px solid #e4e7f0;
    border-radius: 6px;
    background-color: #fff;
    font-size: 14px;
}

.search-box span,
.status-select span {
    padding-bottom: 2px;
}

.search-box {
    width: 255px;
    padding-left: 13px;
    gap: 12px;
    color: #7b8199;
}

.status-select {
    width: 175px;
    padding: 0 12px;
    justify-content: space-between;
}

.status-select svg {
    color: #7a7f90;
}

.assign-desc {
    margin-top: 23px;
    font-size: 14px;
    line-height: 20px;
    color: #6c7289;
}

.board {
    display: flex;
    margin-top: 40px;
    padding-left: 17px;
    gap: 56.5px;
}

.test-list {
    width: 181px;
    flex: none;
}

.test-list-title {
    display: flex;
    align-items: center;
    gap: 7px;
    height: 24px;
    margin-bottom: 17px;
    font-size: 16px;
    font-weight: 500;
    color: #2a3145;
    white-space: nowrap;
}

.test-list-title svg {
    color: #006f69;
}

.test-card {
    height: 156px;
    margin-bottom: 12px;
    padding: 16px;
    border-left: 3px solid #e3e6f4;
    border-radius: 8px;
    background-color: #fff;
    box-shadow: 0 2px 6px rgba(20, 30, 60, 0.1);
}

.test-top {
    display: flex;
    align-items: center;
    gap: 12px;
    min-height: 36px;
}

.test-icon {
    width: 36px;
    height: 36px;
    flex: none;
    border-radius: 50%;
    color: #fff;
    display: flex;
    align-items: center;
    justify-content: center;
}

.purple { background-color: #6741f0; }
.red { background-color: #f7003f; }
.green { background-color: #00d35a; }

.test-name {
    margin: -2px 0 2px;
    font-size: 16px;
    line-height: 24px;
    font-weight: 500;
}

.test-desc {
    margin-top: 7px;
    font-size: 14px;
    line-height: 20px;
    color: #5f6680;
    white-space: nowrap;
}

.test-meta {
    margin-top: 13px;
    display: flex;
    justify-content: space-between;
    font-size: 12px;
    line-height: 16px;
    color: #81879e;
    white-space: nowrap;
}

.test-time {
    display: flex;
    align-items: center;
    gap: 4px;
}

.test-time svg {
    width: 12px;
    height: 12px;
}

.client-grid {
    flex: 1;
    display: grid;
    grid-template-columns: repeat(3, 267.5px);
    column-gap: 47.5px;
    row-gap: 47px;
    align-content: start;
}

.client-head {
    display: flex;
    align-items: center;
    justify-content: space-between;
    height: 24px;
}

.client-name {
    font-size: 16px;
    font-weight: 500;
}

.badge {
    height: 22px;
    margin-top: 2px;
    padding: 0 12px;
    border-radius: 11px;
    background-color: #006f69;
    color: #fff;
    font-size: 12px;
    font-weight: 500;
    line-height: 21px;
}

.badge-pending {
    background-color: #c4a81c;
    color: #1d1a05;
}

.client-email {
    margin-top: 13px;
    padding-bottom: 16px;
    border-bottom: 1px solid #e4e7f0;
    font-size: 12px;
    line-height: 16px;
    color: #81879e;
}

.client-label {
    margin-top: 20px;
    height: 16px;
    padding-right: 4px;
    display: flex;
    align-items: center;
    justify-content: space-between;
    font-size: 12px;
    font-weight: 500;
    color: #6c7289;
}

.client-label svg {
    stroke-width: 1.7;
    color: #6c7289;
}

.dropzone {
    height: 154px;
    margin-top: 16px;
    padding: 32px 16px 0;
    border: 1px dashed #cdd1de;
    border-radius: 8px;
    text-align: center;
    font-size: 14px;
    line-height: 20px;
    color: #81879e;
}

.drop-icon {
    width: 36px;
    height: 36px;
    margin-bottom: 11px;
    border-radius: 50%;
    background-color: #f1f3f9;
    display: inline-flex;
    align-items: center;
    justify-content: center;
    vertical-align: top;
}

.drop-icon svg {
    stroke-width: 1.6;
}
```
